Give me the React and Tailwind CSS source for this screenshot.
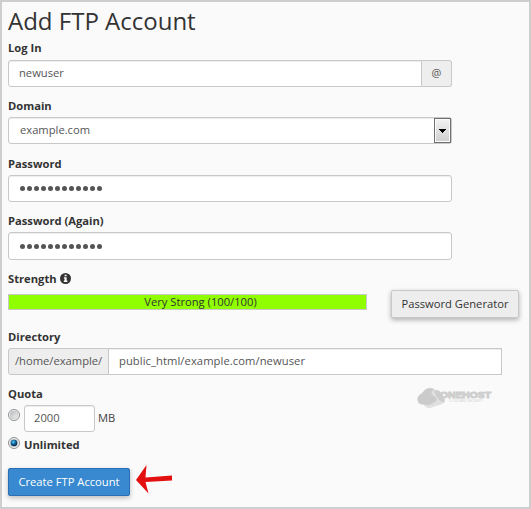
const control =
  'rounded-[3px] border border-[#c8c8c8] bg-white text-[#555] shadow-[inset_0_1px_1px_rgba(0,0,0,0.075)]';

function Label({ children }) {
  return <div className="mb-[3px] flex h-4 items-center text-[11.2px] leading-4 font-bold text-[#333]">{children}</div>;
}

function Dots() {
  return (
    <div className="flex gap-[2px]">
      {Array.from({ length: 12 }, (_, i) => (
        <span key={i} className="size-[5px] rounded-full bg-[#555]" />
      ))}
    </div>
  );
}

function Radio({ checked }) {
  return (
    <svg className="size-3 shrink-0" viewBox="0 0 12 12">
      <defs>
        <linearGradient id="ring" x1="0" y1="0" x2="1" y2="1">
          <stop offset="0" stopColor="#b5b8bc" />
          <stop offset="1" stopColor="#f4f4f4" />
        </linearGradient>
        <radialGradient id="ball" cx=".4" cy=".35" r=".65">
          <stop offset="0" stopColor="#5fd0f5" />
          <stop offset=".45" stopColor="#1671a8" />
          <stop offset="1" stopColor="#0b2040" />
        </radialGradient>
      </defs>
      <circle cx="6" cy="6" r="5.5" fill="#f8f8f8" stroke="#8e8f8f" />
      <circle cx="6" cy="6" r="3.9" fill="url(#ring)" stroke="#bcc0c4" strokeWidth=".6" />
      {checked && <circle cx="6" cy="6" r="3.3" fill="url(#ball)" />}
    </svg>
  );
}

function Watermark() {
  return (
    <svg className="h-[22px] w-[76px]" viewBox="0 0 76 22">
      <path d="M1 13C0 10 3 8 6 6C9 1 15 0 18 3C22 3 25 5 26 9C29 11 29 16 25 17C21 18 17 20 13 21C9 21 8 19 7 18C3 18 0 16 1 13Z" fill="#e0e0e0" />
      <path d="M.5 13C0 9 3 8 6 5C9 0 15 0 18 3C13 3 14 7 17 9C21 11 20 15 16 16C12 19 8 18 6 17C3 17 1 16 .5 13Z" fill="#cbcbcb" />
      <path d="M17 4C21 2 25 5 24 9C26 11 28 12 27 15C22 15 19 9 17 4Z" fill="#cdcdcd" />
      <text x="23" y="10.5" fontFamily="Liberation Sans, sans-serif" fontSize="9" fontWeight="bold" fill="#cecece" stroke="#cecece" strokeWidth="1" textLength="51" lengthAdjust="spacingAndGlyphs">ONEHOST</text>
      <text x="32" y="15.2" fontFamily="Liberation Sans, sans-serif" fontSize="3" fill="#d0d0d0" textLength="34" lengthAdjust="spacingAndGlyphs">CLOUD AND SECURITY</text>
    </svg>
  );
}

export default function App() {
  return (
    <main className="flex h-[509px] w-[531px] flex-col overflow-hidden border-2 border-[#cecece] bg-[#fafafa] pl-[6px] font-['Open_Sans',sans-serif] text-[11.2px] text-[#333]">
      <h1 className="h-[38px] shrink-0 text-[24px] leading-[37px]">Add FTP Account</h1>

      <section className="mb-[11px]">
        <Label>Log In</Label>
        <div className="mt-[4px] flex h-[27px] w-[444px]">
          <div className={`${control} flex flex-1 items-center rounded-r-none pb-px pl-[10px]`}>newuser</div>
          <div className="flex w-[30px] items-center justify-center rounded-r-[3px] border border-l-0 border-[#c8c8c8] bg-[#eee] text-[11px] text-[#555]">@</div>
        </div>
      </section>

      <section className="mb-[12px]">
        <Label>Domain</Label>
        <div className={`${control} flex h-[27px] w-[444px] items-center justify-between pl-[11px]`}>
          <span>example.com</span>
          <span className="flex h-[25px] w-[17px] items-center justify-center border border-[#707070] bg-linear-to-b from-[#f3f3f3] to-[#cfcfcf] shadow-[inset_0_0_0_1px_#fafafa]">
            <svg className="h-1 w-[7px]" viewBox="0 0 7 4" shapeRendering="crispEdges">
              <path d="M0 0H7V1H6V2H5V3H4V4H3V3H2V2H1V1H0Z" fill="#000" />
            </svg>
          </span>
        </div>
      </section>

      <section className="mb-[11px]">
        <Label>Password</Label>
        <div className={`${control} flex h-[27px] w-[444px] items-center pl-[11px]`}><Dots /></div>
      </section>

      <section className="mb-[11px]">
        <Label>Password (Again)</Label>
        <div className={`${control} flex h-[28px] w-[444px] items-center pl-[11px]`}><Dots /></div>
      </section>

      <section className="flex h-[58px] shrink-0">
        <div className="w-[359px]">
          <Label>
            Strength
            <svg className="-mt-px ml-[3px] size-[11px]" viewBox="0 0 11 11">
              <circle cx="5.5" cy="5.5" r="5.5" fill="#333" />
              <path d="M4.6 1.7h2v1.6h-2zM3.9 4.3h2.7v3.3h.8v1.3H3.8V7.6h.8V5.5h-.7z" fill="#fff" />
            </svg>
          </Label>
          <div className="mt-[7px] h-4 border border-[#c8c8c8] bg-[#90ff00] pl-[26px] text-center leading-[14px]">Very Strong (100/100)</div>
        </div>
        <button className="mt-[19px] ml-6 h-[28px] w-[128px] rounded-[2px] border border-[#c8c8c8] bg-[#ededed] whitespace-nowrap shadow-[0_2px_5px_rgba(0,0,0,0.3)]">Password Generator</button>
      </section>

      <section className="mb-[11px]">
        <Label>Directory</Label>
        <div className="flex h-[27px] w-[494px]">
          <div className="flex w-[101px] shrink-0 items-center rounded-l-[3px] border border-[#c8c8c8] bg-[#eee] pl-[6px] text-[#555]">/home/example/</div>
          <div className="flex flex-1 items-center border border-l-0 border-[#c8c8c8] bg-white pl-[10px] tracking-[0.08px] text-[#555] shadow-[inset_0_1px_1px_rgba(0,0,0,0.075)]">public_html/example.com/newuser</div>
        </div>
      </section>

      <section className="flex h-[82px] shrink-0">
        <div className="w-[409px]">
          <Label>Quota</Label>
          <div className="flex h-[27px]">
            <div className="mt-[4px]"><Radio /></div>
            <div className={`${control} ml-1 flex w-[71px] items-center pl-[9px]`}>2000</div>
            <span className="ml-[3px] leading-[25px] text-[#444]">MB</span>
          </div>
          <div className="mt-[5px] flex h-4 font-bold">
            <Radio checked />
            <span className="ml-1 leading-4">Unlimited</span>
          </div>
        </div>
        <div className="mt-px"><Watermark /></div>
      </section>

      <div className="flex">
        <button className="h-[28px] w-[122px] rounded-[2px] border border-[#2a70b4] bg-[#3889cf] whitespace-nowrap text-white shadow-[0_2px_5px_rgba(0,0,0,0.25)]">Create FTP Account</button>
        <svg className="-mt-[4px] ml-[6px] h-[30px] w-9" viewBox="0 0 36 30">
          <path d="M0 16L10.5 1L9.5 13.5L36 11.5V16.5L9.5 18L12.5 29.5Z" fill="#e31010" />
        </svg>
      </div>
    </main>
  );
}
